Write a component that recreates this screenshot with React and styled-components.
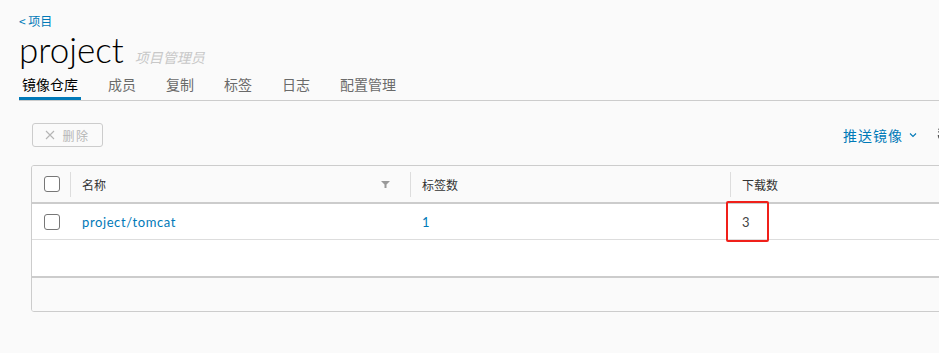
import React from "react";
import styled, { createGlobalStyle } from "styled-components";

const Global = createGlobalStyle`
  html, body { margin: 0; padding: 0; background: #fafafa; overflow: hidden; }
  body { font-family: Lato, "Noto Sans CJK SC", sans-serif; }
`;

const Page = styled.div`
  width: 952px;
  padding: 13px 0 0 19px;
  box-sizing: border-box;
`;

const Crumb = styled.a`
  display: block;
  font-size: 12px;
  line-height: 16px;
  height: 18px;
  color: #0079b8;
  text-decoration: none;
  font-family: "Noto Sans CJK SC", sans-serif;
`;

const TitleRow = styled.div`
  display: flex;
  align-items: baseline;
  gap: 11px;
  height: 37px;
`;

const Title = styled.h2`
  margin: 0;
  font-family: Lato, sans-serif;
  font-weight: 300;
  font-size: 35px;
  line-height: 37px;
  color: #000;
`;

const Role = styled.span`
  font-style: italic;
  font-size: 14px;
  color: #c8c8c8;
  font-family: "Noto Sans CJK SC", sans-serif;
`;

const Tabs = styled.nav`
  display: flex;
  gap: 24px;
  height: 32px;
  border-bottom: 1px solid #ccc;
`;

const Tab = styled.div`
  padding: 0 3px;
  display: flex;
  align-items: center;
  font-size: 14px;
  font-family: "Noto Sans CJK SC", sans-serif;
  color: ${(p) => (p.$active ? "#000" : "#6a6a6a")};
  box-shadow: ${(p) => (p.$active ? "inset 0 -3px 0 #0079b8" : "none")};
`;

const Content = styled.div`
  padding-left: 12px;
`;

const Toolbar = styled.div`
  display: flex;
  justify-content: space-between;
  align-items: center;
  margin-top: 22px;
  height: 24px;
`;

const GhostButton = styled.button`
  height: 24px;
  width: 71px;
  margin-left: 1px;
  border: 1px solid #ccc;
  border-radius: 3px;
  background: transparent;
  color: #b5b5b5;
  font-size: 12px;
  letter-spacing: 1.5px;
  font-family: "Noto Sans CJK SC", sans-serif;
  display: flex;
  align-items: center;
  justify-content: center;
  gap: 7px;
  padding: 0;
`;

const RightTools = styled.div`
  display: flex;
  align-items: center;
  gap: 19px;
`;

const PushButton = styled.div`
  display: flex;
  align-items: center;
  gap: 6px;
  color: #0079b8;
  font-size: 14px;
  letter-spacing: 1px;
  font-family: "Noto Sans CJK SC", sans-serif;
`;

const Table = styled.div`
  margin-top: 18px;
  border: 1px solid #ccc;
  border-radius: 3px;
  background: #fff;
  overflow: hidden;
`;

const Row = styled.div`
  display: grid;
  grid-template-columns: 38px 340px 320px 1fr;
  align-items: center;
  box-sizing: border-box;
  height: ${(p) => p.$h}px;
  background: ${(p) => (p.$head ? "#fafafa" : "#fff")};
  border-bottom: ${(p) => p.$bb};
`;

const Cell = styled.div`
  position: relative;
  height: 100%;
  display: flex;
  align-items: center;
  padding-left: 12px;
  font-size: 13px;
  font-family: Lato, "Noto Sans CJK SC", sans-serif;
  color: ${(p) => p.$color || "#000"};
  box-sizing: border-box;
`;

const HeadCell = styled(Cell)`
  font-size: 12px;
  font-family: "Noto Sans CJK SC", sans-serif;
  color: #333;
  &::before {
    content: "";
    display: ${(p) => (p.$sep ? "block" : "none")};
    position: absolute;
    left: 0;
    top: 6px;
    bottom: 5px;
    width: 1px;
    background: #ddd;
  }
`;

const Checkbox = styled.span`
  width: 14px;
  height: 14px;
  border: 1px solid #777;
  border-radius: 3px;
  background: #fff;
  display: inline-block;
`;

const LinkText = styled.span`
  color: #0079b8;
  font-size: 13px;
  letter-spacing: 0.6px;
`;

const FilterIcon = styled.svg`
  position: absolute;
  right: 20px;
  top: 15px;
`;

const Highlight = styled.div`
  position: absolute;
  left: -4px;
  top: -3px;
  width: 43px;
  height: 41px;
  border: 2px solid #f0201a;
  border-radius: 2px;
  box-sizing: border-box;
`;

const Footer = styled.div`
  height: 33px;
  background: #fafafa;
`;

export default function App() {
  return (
    <>
      <Global />
      <Page>
        <Crumb>&lt; 项目</Crumb>
        <TitleRow>
          <Title>project</Title>
          <Role>项目管理员</Role>
        </TitleRow>
        <Tabs>
          <Tab $active>镜像仓库</Tab>
          <Tab>成员</Tab>
          <Tab>复制</Tab>
          <Tab>标签</Tab>
          <Tab>日志</Tab>
          <Tab>配置管理</Tab>
        </Tabs>
        <Content>
          <Toolbar>
            <GhostButton>
              <svg width="10" height="10" viewBox="0 0 10 10">
                <path d="M1 1 L9 9 M9 1 L1 9" stroke="#b5b5b5" strokeWidth="1.1" />
              </svg>
              删除
            </GhostButton>
            <RightTools>
              <PushButton>
                推送镜像
                <svg width="8" height="6" viewBox="0 0 8 6">
                  <path d="M1 1.5 L4 4.5 L7 1.5" fill="none" stroke="#0079b8" strokeWidth="1.1" />
                </svg>
              </PushButton>
              <svg width="16" height="16" viewBox="0 0 16 16">
                <path d="M2.5 8 A5.5 5.5 0 1 0 4.5 3.8" fill="none" stroke="#555" strokeWidth="1.6" />
                <path d="M2.5 1.8 L4.8 4 L2.3 5.2" fill="none" stroke="#555" strokeWidth="1.4" />
              </svg>
            </RightTools>
          </Toolbar>
          <Table>
            <Row $head $h={38} $bb="2px solid #ccc">
              <HeadCell><Checkbox /></HeadCell>
              <HeadCell $sep>
                名称
                <FilterIcon width="9" height="7" viewBox="0 0 9 7">
                  <path d="M0 0 H9 L5.5 3.5 V7 H3.5 V3.5 Z" fill="#999" />
                </FilterIcon>
              </HeadCell>
              <HeadCell $sep>标签数</HeadCell>
              <HeadCell $sep>下载数</HeadCell>
            </Row>
            <Row $h={36} $bb="1px solid #ddd">
              <Cell><Checkbox /></Cell>
              <Cell><LinkText>project/tomcat</LinkText></Cell>
              <Cell $color="#0079b8">1</Cell>
              <Cell $color="#444">
                3
                <Highlight />
              </Cell>
            </Row>
            <Row $h={38} $bb="2px solid #ccc" />
            <Footer />
          </Table>
        </Content>
      </Page>
    </>
  );
}
